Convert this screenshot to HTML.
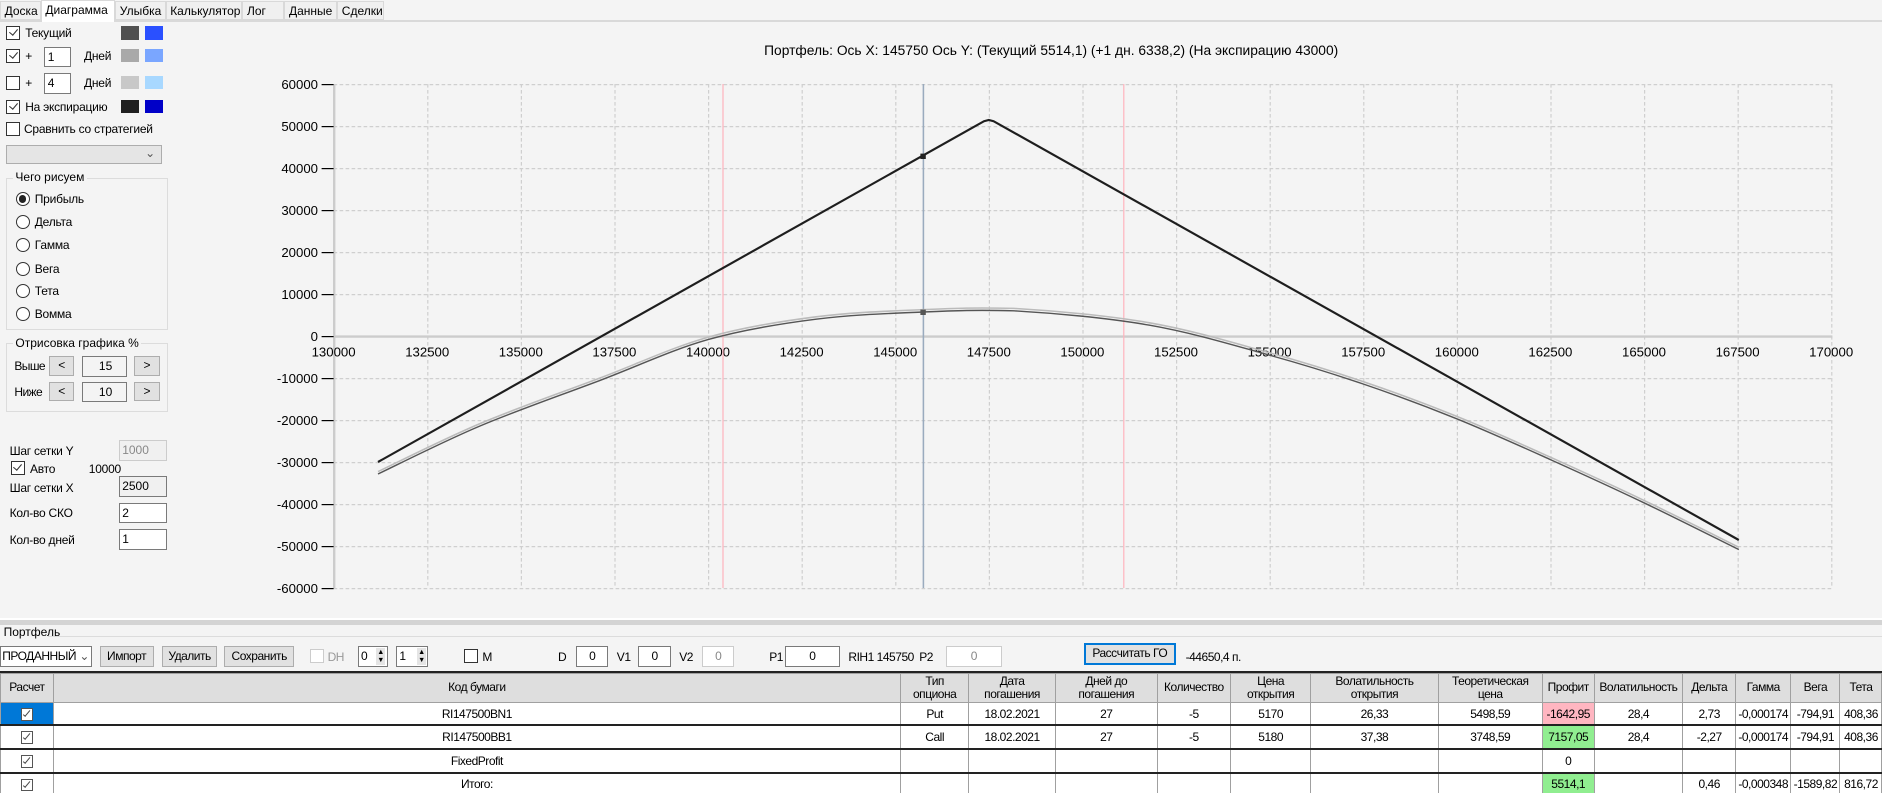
<!DOCTYPE html>
<html><head><meta charset="utf-8">
<style>
html,body{margin:0;padding:0;background:#f4f4f4;overflow:hidden;width:1882px;height:793px}
#w{zoom:1.2;width:1568.4px;height:661px;position:relative;font-family:"Liberation Sans",sans-serif;font-size:10px;color:#000}
.a{position:absolute;white-space:nowrap}
.lp .a{letter-spacing:-0.2px}
.tab{position:absolute;top:1px;height:16px;border:1px solid #d9d9d9;background:#f0f0f0;line-height:16px;padding-left:3px;box-sizing:border-box;overflow:hidden}
.cb{position:absolute;width:10px;height:10px;border:1px solid #333;background:#fff}
.cb.c::after{content:"";position:absolute;left:3px;top:0px;width:3px;height:6px;border:solid #333;border-width:0 1px 1px 0;transform:rotate(40deg)}
.sw{position:absolute;width:15px;height:11px}
.tb{position:absolute;border:1px solid #7a7a7a;background:#fff;box-sizing:border-box;padding-left:2px;line-height:15px}
.rd{position:absolute;width:10px;height:10px;border:1px solid #333;border-radius:50%;background:#fff}
.btn{position:absolute;border:1px solid #adadad;background:#e1e1e1;box-sizing:border-box;text-align:center}
.grp{position:absolute;border:1px solid #dcdcdc}
.gl{position:absolute;background:#f4f4f4;padding:0 2px;top:-7px;left:5px}
table{position:absolute;left:0;top:561px;border-collapse:collapse;font-size:10px;letter-spacing:-0.4px;table-layout:fixed;width:1568px}
td,th{border:1px solid #a0a0a0;text-align:center;padding:0;overflow:hidden;white-space:nowrap}
th{background:#dedede;font-weight:normal;height:23px;line-height:11px}
td{background:#fff;height:18px}
tr.k td{border-bottom:2px solid #222}
.ck{display:inline-block;width:9px;height:9px;border:1px solid #555;background:#fff;position:relative;vertical-align:middle}
.ck::after{content:"";position:absolute;left:3px;top:0;width:2px;height:6px;border:solid #444;border-width:0 1px 1px 0;transform:rotate(40deg)}
</style></head><body><div id="w">
<!-- tabs -->
<div class="a" style="left:0;top:17px;width:1568px;height:1px;background:#d9d9d9"></div>
<div class="tab" style="left:0;width:34px">Доска</div>
<div class="tab" style="left:34px;width:62px;background:#fff;top:0;height:18px;border-bottom:none">Диаграмма</div>
<div class="tab" style="left:96px;width:42px">Улыбка</div>
<div class="tab" style="left:138px;width:64px">Калькулятор</div>
<div class="tab" style="left:202px;width:35px">Лог</div>
<div class="tab" style="left:237px;width:44px">Данные</div>
<div class="tab" style="left:281px;width:39px">Сделки</div>

<div class="lp">
<div class="cb c" style="left:5px;top:22px"></div><div class="a" style="left:21px;top:22px">Текущий</div>
<div class="sw" style="left:101px;top:22px;background:#505050"></div><div class="sw" style="left:121px;top:22px;background:#2a50ff"></div>
<div class="cb c" style="left:5px;top:41px"></div><div class="a" style="left:21px;top:41px">+</div>
<div class="tb" style="left:37px;top:39px;width:22px;height:17px">1</div><div class="a" style="left:70px;top:41px">Дней</div>
<div class="sw" style="left:101px;top:41px;background:#a9a9a9"></div><div class="sw" style="left:121px;top:41px;background:#7aa6ff"></div>
<div class="cb" style="left:5px;top:63px"></div><div class="a" style="left:21px;top:63px">+</div>
<div class="tb" style="left:37px;top:61px;width:22px;height:17px">4</div><div class="a" style="left:70px;top:63px">Дней</div>
<div class="sw" style="left:101px;top:63px;background:#c8c8c8"></div><div class="sw" style="left:121px;top:63px;background:#a8d8ff"></div>
<div class="cb c" style="left:5px;top:83px"></div><div class="a" style="left:21px;top:83px">На экспирацию</div>
<div class="sw" style="left:101px;top:83px;background:#202020"></div><div class="sw" style="left:121px;top:83px;background:#0000c8"></div>
<div class="cb" style="left:5px;top:102px"></div><div class="a" style="left:20px;top:102px">Сравнить со стратегией</div>
<div class="a" style="left:5px;top:121px;width:130px;height:16px;border:1px solid #adadad;background:#e5e5e5;box-sizing:border-box"><span style="position:absolute;right:5px;top:0;font-size:10px;color:#555">&#8964;</span></div>

<div class="grp" style="left:5px;top:148px;width:133px;height:125px"><span class="gl">Чего рисуем</span></div>
<div class="rd" style="left:13px;top:160px"><div style="position:absolute;left:2px;top:2px;width:6px;height:6px;border-radius:50%;background:#222"></div></div><div class="a" style="left:29px;top:160px">Прибыль</div>
<div class="rd" style="left:13px;top:179px"></div><div class="a" style="left:29px;top:179px">Дельта</div>
<div class="rd" style="left:13px;top:198px"></div><div class="a" style="left:29px;top:198px">Гамма</div>
<div class="rd" style="left:13px;top:218px"></div><div class="a" style="left:29px;top:218px">Вега</div>
<div class="rd" style="left:13px;top:237px"></div><div class="a" style="left:29px;top:237px">Тета</div>
<div class="rd" style="left:13px;top:256px"></div><div class="a" style="left:29px;top:256px">Вомма</div>

<div class="grp" style="left:5px;top:286px;width:133px;height:56px"><span class="gl">Отрисовка графика %</span></div>
<div class="a" style="left:12px;top:299px;letter-spacing:-0.5px">Выше</div>
<div class="btn" style="left:41px;top:297px;width:21px;height:16px;line-height:14px">&lt;</div>
<div class="tb" style="left:68px;top:297px;width:38px;height:17px;text-align:center;background:#f4f4f4">15</div>
<div class="btn" style="left:112px;top:297px;width:21px;height:16px;line-height:14px">&gt;</div>
<div class="a" style="left:12px;top:321px;letter-spacing:-0.5px">Ниже</div>
<div class="btn" style="left:41px;top:318px;width:21px;height:16px;line-height:14px">&lt;</div>
<div class="tb" style="left:68px;top:318px;width:38px;height:17px;text-align:center;background:#f4f4f4">10</div>
<div class="btn" style="left:112px;top:318px;width:21px;height:16px;line-height:14px">&gt;</div>

<div class="a" style="left:8px;top:370px">Шаг сетки Y</div>
<div class="tb" style="left:99px;top:367px;width:40px;height:17px;background:#f0f0f0;border-color:#ccc;color:#888">1000</div>
<div class="cb c" style="left:9px;top:384px"></div><div class="a" style="left:25px;top:385px">Авто</div><div class="a" style="left:74px;top:385px">10000</div>
<div class="a" style="left:8px;top:401px">Шаг сетки X</div>
<div class="tb" style="left:99px;top:397px;width:40px;height:17px;background:#f0f0f0">2500</div>
<div class="a" style="left:8px;top:422px">Кол-во СКО</div>
<div class="tb" style="left:99px;top:419px;width:40px;height:17px">2</div>
<div class="a" style="left:8px;top:444px">Кол-во дней</div>
<div class="tb" style="left:99px;top:441px;width:40px;height:17px">1</div>
</div>

<!-- chart -->
<svg class="a" style="left:0;top:0" width="1568" height="515" viewBox="0 0 1568 515" font-family="Liberation Sans, sans-serif" font-size="11">
<text x="876" y="46" text-anchor="middle" font-size="11.5">Портфель: Ось X: 145750 Ось Y:  (Текущий 5514,1)  (+1 дн. 6338,2)  (На экспирацию 43000)</text>
<g stroke="#cfcfcf" stroke-dasharray="3,2" stroke-width="1">
<line x1="278" y1="70.5" x2="1527" y2="70.5"/><line x1="278" y1="105.5" x2="1527" y2="105.5"/><line x1="278" y1="140.5" x2="1527" y2="140.5"/><line x1="278" y1="175.5" x2="1527" y2="175.5"/><line x1="278" y1="210.5" x2="1527" y2="210.5"/><line x1="278" y1="245.5" x2="1527" y2="245.5"/><line x1="278" y1="315.5" x2="1527" y2="315.5"/><line x1="278" y1="350.5" x2="1527" y2="350.5"/><line x1="278" y1="385.5" x2="1527" y2="385.5"/><line x1="278" y1="420.5" x2="1527" y2="420.5"/><line x1="278" y1="455.5" x2="1527" y2="455.5"/><line x1="278" y1="490.5" x2="1527" y2="490.5"/>
<line x1="356.5" y1="70" x2="356.5" y2="490"/><line x1="434.5" y1="70" x2="434.5" y2="490"/><line x1="512.5" y1="70" x2="512.5" y2="490"/><line x1="590.5" y1="70" x2="590.5" y2="490"/><line x1="668.5" y1="70" x2="668.5" y2="490"/><line x1="746.5" y1="70" x2="746.5" y2="490"/><line x1="824.5" y1="70" x2="824.5" y2="490"/><line x1="902.5" y1="70" x2="902.5" y2="490"/><line x1="980.5" y1="70" x2="980.5" y2="490"/><line x1="1058.5" y1="70" x2="1058.5" y2="490"/><line x1="1136.5" y1="70" x2="1136.5" y2="490"/><line x1="1214.5" y1="70" x2="1214.5" y2="490"/><line x1="1292.5" y1="70" x2="1292.5" y2="490"/><line x1="1370.5" y1="70" x2="1370.5" y2="490"/><line x1="1448.5" y1="70" x2="1448.5" y2="490"/><line x1="1526.5" y1="70" x2="1526.5" y2="490"/>
</g>
<line x1="278.5" y1="70" x2="278.5" y2="490" stroke="#cccccc" stroke-width="2"/>
<line x1="278" y1="280.5" x2="1527" y2="280.5" stroke="#cccccc" stroke-width="2"/>
<g stroke="#000" stroke-width="1">
<line x1="268" y1="70.5" x2="278" y2="70.5"/><line x1="268" y1="105.5" x2="278" y2="105.5"/><line x1="268" y1="140.5" x2="278" y2="140.5"/><line x1="268" y1="175.5" x2="278" y2="175.5"/><line x1="268" y1="210.5" x2="278" y2="210.5"/><line x1="268" y1="245.5" x2="278" y2="245.5"/><line x1="268" y1="280.5" x2="278" y2="280.5"/><line x1="268" y1="315.5" x2="278" y2="315.5"/><line x1="268" y1="350.5" x2="278" y2="350.5"/><line x1="268" y1="385.5" x2="278" y2="385.5"/><line x1="268" y1="420.5" x2="278" y2="420.5"/><line x1="268" y1="455.5" x2="278" y2="455.5"/><line x1="268" y1="490.5" x2="278" y2="490.5"/>
</g>
<g text-anchor="end">
<text x="265" y="74">60000</text><text x="265" y="109">50000</text><text x="265" y="144">40000</text><text x="265" y="179">30000</text><text x="265" y="214">20000</text><text x="265" y="249">10000</text><text x="265" y="284">0</text><text x="265" y="319">-10000</text><text x="265" y="354">-20000</text><text x="265" y="389">-30000</text><text x="265" y="424">-40000</text><text x="265" y="459">-50000</text><text x="265" y="494">-60000</text>
</g>
<g text-anchor="middle">
<text x="278" y="297">130000</text><text x="356" y="297">132500</text><text x="434" y="297">135000</text><text x="512" y="297">137500</text><text x="590" y="297">140000</text><text x="668" y="297">142500</text><text x="746" y="297">145000</text><text x="824" y="297">147500</text><text x="902" y="297">150000</text><text x="980" y="297">152500</text><text x="1058" y="297">155000</text><text x="1136" y="297">157500</text><text x="1214" y="297">160000</text><text x="1292" y="297">162500</text><text x="1370" y="297">165000</text><text x="1448" y="297">167500</text><text x="1526" y="297">170000</text>
</g>
<line x1="602.5" y1="70" x2="602.5" y2="490" stroke="#ffb3bd" stroke-width="1"/>
<line x1="936.5" y1="70" x2="936.5" y2="490" stroke="#ffb3bd" stroke-width="1"/>
<line x1="769.5" y1="70" x2="769.5" y2="490" stroke="#9aabbe" stroke-width="1.3"/>
<defs><path id="g" d="M315,395 C329.2,388.3 369.2,368 400,355 C430.8,342 468.3,329 500,317 C531.7,305 560,291.5 590,283 C620,274.5 650.2,269.8 680,266 C709.8,262.2 741.5,261.2 769,260 C796.5,258.8 813.5,258.2 845,259 C876.5,260.8 922.5,264.8 958,271 C993.5,277.2 1028.3,287.8 1058,296 C1087.7,304.2 1110,311.2 1136,320 C1162,328.8 1188,338.5 1214,349 C1240,359.5 1266,371.3 1292,383 C1318,394.7 1343.8,406.5 1370,419 C1396.2,431.5 1435.8,451.5 1449,458" fill="none"/></defs>
<use href="#g" transform="translate(0,-2)" stroke="#bbbbbb" stroke-width="1.3"/>
<use href="#g" stroke="#555" stroke-width="1.2"/>
<polyline points="315,385 820,101 824,100 828,101 1449,450" fill="none" stroke="#1e1e1e" stroke-width="1.8"/>
<rect x="767" y="128" width="4.5" height="4.5" fill="#222"/>
<rect x="767" y="258" width="4.5" height="4.5" fill="#555"/>
</svg>

<!-- splitter -->
<div class="a" style="left:0;top:515px;width:1568px;height:2px;background:#fff"></div>
<div class="a" style="left:0;top:517px;width:1568px;height:4px;background:#d4d4d4"></div>
<div class="a" style="left:40px;top:530px;width:1528px;height:1px;background:#dcdcdc"></div>
<div class="a" style="left:3px;top:521px;font-size:10px">Портфель</div>

<!-- toolbar -->
<div style="font-size:10px;letter-spacing:-0.4px">
<div class="a" style="left:0;top:538px;width:77px;height:18px;border:1px solid #7a7a7a;background:#fff;box-sizing:border-box;line-height:16px;padding-left:1px;overflow:hidden">ПРОДАННЫЙ<span style="position:absolute;right:2px;color:#555;background:#fff">&#8964;</span></div>
<div class="btn" style="left:83px;top:538px;width:45px;height:18px;line-height:16px">Импорт</div>
<div class="btn" style="left:135px;top:538px;width:46px;height:18px;line-height:16px">Удалить</div>
<div class="btn" style="left:187px;top:538px;width:58px;height:18px;line-height:16px">Сохранить</div>
<div class="cb" style="left:258px;top:541px;border-color:#ccc"></div><div class="a" style="left:273px;top:542px;color:#999">DH</div>
<div class="tb" style="left:298px;top:538px;width:25px;height:18px;line-height:16px">0<span style="position:absolute;right:1px;top:1px;width:8px;height:14px;background:#e5e5e5;font-size:6px;line-height:7px;text-align:center">▲<br>▼</span></div>
<div class="tb" style="left:330px;top:538px;width:27px;height:18px;line-height:16px">1<span style="position:absolute;right:1px;top:1px;width:8px;height:14px;background:#e5e5e5;font-size:6px;line-height:7px;text-align:center">▲<br>▼</span></div>
<div class="cb" style="left:387px;top:541px"></div><div class="a" style="left:402px;top:542px">M</div>
<div class="a" style="left:465px;top:542px">D</div>
<div class="tb" style="left:480px;top:538px;width:27px;height:18px;line-height:16px;text-align:center;padding:0">0</div>
<div class="a" style="left:514px;top:542px">V1</div>
<div class="tb" style="left:532px;top:538px;width:27px;height:18px;line-height:16px;text-align:center;padding:0">0</div>
<div class="a" style="left:566px;top:542px">V2</div>
<div class="tb" style="left:585px;top:538px;width:27px;height:18px;line-height:16px;text-align:center;padding:0;border-color:#ccc;color:#888">0</div>
<div class="a" style="left:641px;top:542px">P1</div>
<div class="tb" style="left:654px;top:538px;width:46px;height:18px;line-height:16px;text-align:center;padding:0">0</div>
<div class="a" style="left:707px;top:542px">RIH1 145750</div>
<div class="a" style="left:766px;top:542px">P2</div>
<div class="tb" style="left:788px;top:538px;width:47px;height:18px;line-height:16px;text-align:center;padding:0;border-color:#ccc;color:#888">0</div>
<div class="btn" style="left:903px;top:536px;width:77px;height:18px;line-height:14px;border:2px solid #0078d7">Рассчитать ГО</div>
<div class="a" style="left:988px;top:542px">-44650,4 п.</div>
</div>
<div class="a" style="left:0;top:559px;width:1568px;height:2px;background:#222"></div>

<table>
<colgroup><col style="width:44px"><col style="width:706px"><col style="width:57px"><col style="width:72px"><col style="width:85px"><col style="width:61px"><col style="width:67px"><col style="width:106px"><col style="width:87px"><col style="width:43px"><col style="width:74px"><col style="width:44px"><col style="width:46px"><col style="width:41px"><col style="width:35px"></colgroup>
<tr><th>Расчет</th><th>Код бумаги</th><th>Тип<br>опциона</th><th>Дата<br>погашения</th><th>Дней до<br>погашения</th><th>Количество</th><th>Цена<br>открытия</th><th>Волатильность<br>открытия</th><th>Теоретическая<br>цена</th><th>Профит</th><th>Волатильность</th><th>Дельта</th><th>Гамма</th><th>Вега</th><th>Тета</th></tr>
<tr class="k"><td style="background:#0078d7"><span class="ck"></span></td><td>RI147500BN1</td><td>Put</td><td>18.02.2021</td><td>27</td><td>-5</td><td>5170</td><td>26,33</td><td>5498,59</td><td style="background:#ffb6c1">-1642,95</td><td>28,4</td><td>2,73</td><td>-0,000174</td><td>-794,91</td><td>408,36</td></tr>
<tr class="k"><td><span class="ck"></span></td><td>RI147500BB1</td><td>Call</td><td>18.02.2021</td><td>27</td><td>-5</td><td>5180</td><td>37,38</td><td>3748,59</td><td style="background:#90ee90">7157,05</td><td>28,4</td><td>-2,27</td><td>-0,000174</td><td>-794,91</td><td>408,36</td></tr>
<tr class="k"><td><span class="ck"></span></td><td>FixedProfit</td><td></td><td></td><td></td><td></td><td></td><td></td><td></td><td>0</td><td></td><td></td><td></td><td></td><td></td></tr>
<tr class="k"><td><span class="ck"></span></td><td>Итого:</td><td></td><td></td><td></td><td></td><td></td><td></td><td></td><td style="background:#90ee90">5514,1</td><td></td><td>0,46</td><td>-0,000348</td><td>-1589,82</td><td>816,72</td></tr>
</table>
</div></body></html>
